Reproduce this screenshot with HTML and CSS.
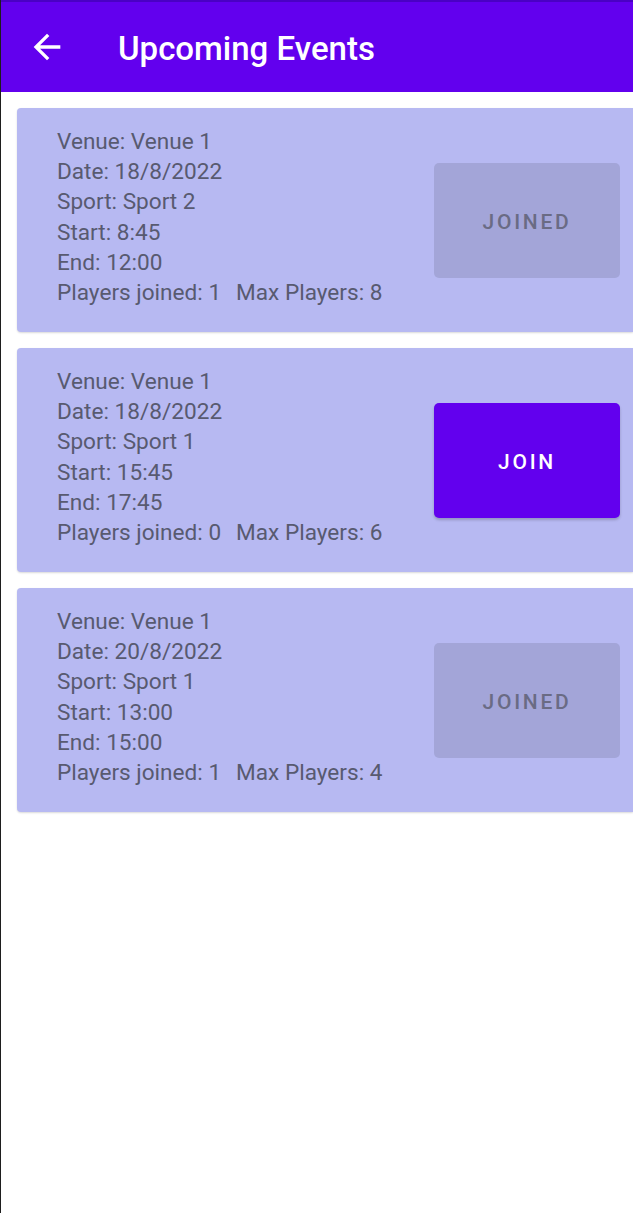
FILE: index.html
```html
<!DOCTYPE html>
<html>
<head>
<meta charset="utf-8">
<link rel="stylesheet" href="styles.css">
</head>
<body>
<div class="screen">
  <header class="appbar">
    <svg class="back" viewBox="0 0 24 24" width="40" height="40"><path fill="#fff" d="M20 11H7.83l5.59-5.59L12 4l-8 8 8 8 1.41-1.41L7.83 13H20v-2z"/></svg>
    <h1 class="title">Upcoming Events</h1>
  </header>
  <main class="list">
    <div class="card">
      <div class="info">
        <div>Venue: Venue 1</div>
        <div>Date: 18/8/2022</div>
        <div>Sport: Sport 2</div>
        <div>Start: 8:45</div>
        <div>End: 12:00</div>
        <div>Players joined: 1<span class="max">Max Players: 8</span></div>
      </div>
      <button class="btn joined">JOINED</button>
    </div>
    <div class="card">
      <div class="info">
        <div>Venue: Venue 1</div>
        <div>Date: 18/8/2022</div>
        <div>Sport: Sport 1</div>
        <div>Start: 15:45</div>
        <div>End: 17:45</div>
        <div>Players joined: 0<span class="max">Max Players: 6</span></div>
      </div>
      <button class="btn join">JOIN</button>
    </div>
    <div class="card">
      <div class="info">
        <div>Venue: Venue 1</div>
        <div>Date: 20/8/2022</div>
        <div>Sport: Sport 1</div>
        <div>Start: 13:00</div>
        <div>End: 15:00</div>
        <div>Players joined: 1<span class="max">Max Players: 4</span></div>
      </div>
      <button class="btn joined">JOINED</button>
    </div>
  </main>
</div>
</body>
</html>
```
FILE: styles.css
```css
html, body {
  margin: 0;
  padding: 0;
  background: #fff;
  overflow: hidden;
}
.screen {
  width: 632px;
  height: 1213px;
  border-left: 1px solid #1e1e1e;
  font-family: Roboto, "Noto Sans", sans-serif;
  overflow: hidden;
}
.appbar {
  height: 90px;
  border-top: 2px solid #4a00c4;
  background: #6200ee;
  display: flex;
  align-items: center;
  padding-left: 26px;
  box-sizing: content-box;
}
.back {
  display: block;
  margin-top: 0;
}
.title {
  margin: 0 0 0 51px;
  color: #fff;
  font-size: 33px;
  font-weight: 500;
  margin-top: 2px;
}
.list {
  display: flex;
  flex-direction: column;
  gap: 16px;
  padding: 16px 0 0 16px;
}
.card {
  height: 224px;
  background: #b7b9f2;
  border-radius: 4px 0 0 4px;
  box-shadow: 0 1px 2px rgba(0,0,0,0.15);
  display: flex;
  align-items: center;
  justify-content: space-between;
  padding-left: 40px;
  padding-right: 13px;
  box-sizing: border-box;
}
.info {
  color: #585a70;
  font-size: 22.6px;
  line-height: 30.2px;
  margin-top: -5px;
}
.max {
  margin-left: 15px;
}
.btn {
  width: 186px;
  height: 115px;
  border: none;
  border-radius: 5px;
  font-family: Roboto, sans-serif;
  font-size: 21px;
  font-weight: 500;
  letter-spacing: 2.7px;
  margin-top: 1px;
  padding-top: 4px;
}
.joined {
  background: #a3a5d8;
  color: #6a6b84;
}
.join {
  background: #6200ee;
  color: #fff;
  box-shadow: 0 2px 3px rgba(0,0,0,0.2);
}
```
